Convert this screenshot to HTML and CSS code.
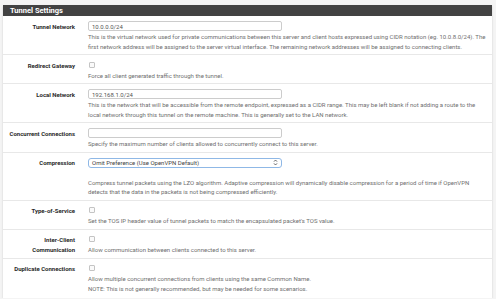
FILE: index.html
```html
<!DOCTYPE html>
<html lang="en">
<head>
    <meta charset="UTF-8">
    <meta name="viewport" content="width=device-width, initial-scale=1.0">
    <title>Tunnel Settings</title>
    <link rel="stylesheet" href="styles.css">
</head>
<body>
    <div class="panel">
        <div class="panel-heading">Tunnel Settings</div>

        <div class="row">
            <label class="row-label">Tunnel Network</label>
            <div class="row-field">
                <input class="text-input" type="text" value="10.0.0.0/24">
                <p class="help">This is the virtual network used for private communications between this server and client hosts expressed using CIDR notation (eg. 10.0.8.0/24). The first network address will be assigned to the server virtual interface. The remaining network addresses will be assigned to connecting clients.</p>
            </div>
        </div>

        <div class="row">
            <label class="row-label">Redirect Gateway</label>
            <div class="row-field">
                <div class="check-line"><span class="check"></span></div>
                <p class="help">Force all client generated traffic through the tunnel.</p>
            </div>
        </div>

        <div class="row">
            <label class="row-label">Local Network</label>
            <div class="row-field">
                <input class="text-input" type="text" value="192.168.1.0/24">
                <p class="help">This is the network that will be accessible from the remote endpoint, expressed as a CIDR range. This may be left blank if not adding a route to the local network through this tunnel on the remote machine. This is generally set to the LAN network.</p>
            </div>
        </div>

        <div class="row">
            <label class="row-label">Concurrent Connections</label>
            <div class="row-field">
                <input class="text-input" type="text" value="">
                <p class="help">Specify the maximum number of clients allowed to concurrently connect to this server.</p>
            </div>
        </div>

        <div class="row">
            <label class="row-label">Compression</label>
            <div class="row-field">
                <div class="select">
                    <span>Omit Preference (Use OpenVPN Default)</span>
                    <svg class="select-arrows" width="5" height="7" viewBox="0 0 5 7">
                        <path d="M1 2.6 L2.5 1 L4 2.6 M1 4.4 L2.5 6 L4 4.4" fill="none" stroke="#555" stroke-width="0.9"/>
                    </svg>
                </div>
                <div class="spacer"></div>
                <p class="help">Compress tunnel packets using the LZO algorithm. Adaptive compression will dynamically disable compression for a period of time if OpenVPN detects that the data in the packets is not being compressed efficiently.</p>
            </div>
        </div>

        <div class="row">
            <label class="row-label">Type-of-Service</label>
            <div class="row-field">
                <div class="check-line"><span class="check"></span></div>
                <p class="help">Set the TOS IP header value of tunnel packets to match the encapsulated packet's TOS value.</p>
            </div>
        </div>

        <div class="row">
            <label class="row-label">Inter-Client Communication</label>
            <div class="row-field">
                <div class="check-line"><span class="check"></span></div>
                <p class="help">Allow communication between clients connected to this server.</p>
            </div>
        </div>

        <div class="row">
            <label class="row-label">Duplicate Connections</label>
            <div class="row-field">
                <div class="check-line"><span class="check"></span></div>
                <p class="help">Allow multiple concurrent connections from clients using the same Common Name.<br>NOTE: This is not generally recommended, but may be needed for some scenarios.</p>
            </div>
        </div>
    </div>
</body>
</html>
```

FILE: styles.css
```css
body {
    font-family: Roboto, "Liberation Sans", sans-serif;
    margin: 0;
    padding: 5px 4px 0 3px;
    background-color: #f4f4f4;
    color: #222;
}

.panel {
    background-color: white;
    box-shadow: 0 1px 2px rgba(0, 0, 0, 0.15);
}

.panel-heading {
    background-color: #424242;
    color: white;
    font-weight: bold;
    font-size: 7.5px;
    height: 11px;
    line-height: 11px;
    padding: 0 7px;
}

.row {
    display: grid;
    grid-template-columns: 80px 1fr;
    border-top: 1px solid #e8e8e8;
    padding: 5px 0 3px 0;
}

.row:first-of-type {
    padding-top: 6px;
}

.row:last-child {
    padding-bottom: 5px;
}

.panel-heading + .row {
    border-top: none;
}

.row-label {
    font-size: 6px;
    font-weight: bold;
    text-align: right;
    padding-right: 8px;
    line-height: 9.5px;
    padding-top: 0.5px;
    color: #2a2a2a;
}

.row-field {
    padding: 0 3px 0 5px;
}

.text-input {
    display: block;
    box-sizing: border-box;
    width: 194px;
    height: 10px;
    margin: 0;
    padding: 0 3px;
    border: 1px solid #ccc;
    border-radius: 2px;
    font-family: inherit;
    font-size: 6px;
    color: #555;
}

.select {
    box-sizing: border-box;
    width: 194px;
    height: 10px;
    padding: 0 3px;
    border: 1px solid #8fb8e6;
    border-radius: 3px;
    font-size: 6px;
    color: #444;
    display: flex;
    align-items: center;
    justify-content: space-between;
}

.select-arrows {
    display: block;
}

.spacer {
    height: 9px;
}

.check-line {
    height: 9.5px;
    display: flex;
    align-items: center;
}

.check {
    display: block;
    width: 4px;
    height: 4px;
    margin-left: 1px;
    border: 1px solid #c4c4c4;
    border-radius: 1px;
    background-color: #fafafa;
}

.help {
    margin: 1px 0 0 0;
    font-size: 6px;
    line-height: 9.5px;
    color: #6f6f6f;
}
```
